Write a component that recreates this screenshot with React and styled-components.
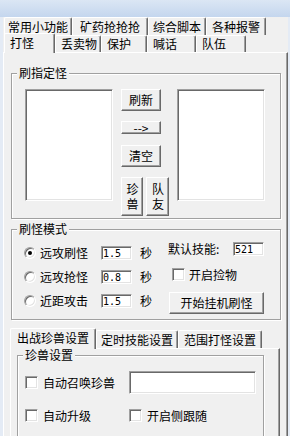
import React from 'react';
import styled, { createGlobalStyle } from 'styled-components';

const FONT = `"Noto Sans CJK SC", "Liberation Sans", sans-serif`;
const MONO = `"DejaVu Sans Mono", "Liberation Mono", monospace`;
const FACE = '#f0f0f0';
const HI = '#ffffff';
const LIGHT = '#e3e3e3';
const SHADOW = '#a0a0a0';
const DARK = '#696969';

const Global = createGlobalStyle`
  html, body { margin: 0; padding: 0; }
  * { box-sizing: border-box; }
  body {
    width: 290px;
    height: 436px;
    overflow: hidden;
    background: linear-gradient(180deg, #dbe6f4 0px, #c4d6ee 17px, #e4ebf5 17px, #e4ebf5 100%);
    font-family: ${FONT};
    font-size: 12px;
    color: #000;
  }
`;

const Window = styled.div`
  margin: 17px 0 0 3px;
  width: 285px;
  height: 419px;
  background: ${FACE};
  display: flex;
  flex-direction: column;
`;

const TabRow = styled.div`
  display: flex;
  align-items: flex-start;
  height: ${p => p.$h}px;
  padding-left: ${p => p.$pl || 0}px;
  flex-shrink: 0;
`;

const Tab = styled.div`
  position: relative;
  z-index: ${p => (p.$active ? 3 : 1)};
  width: ${p => p.$w}px;
  height: ${p => p.$h}px;
  margin-top: ${p => p.$mt || 0}px;
  padding-left: ${p => p.$pl || 0}px;
  padding-bottom: ${p => p.$pb || 0}px;
  display: flex;
  align-items: center;
  justify-content: ${p => (p.$pl ? 'flex-start' : 'center')};
  background: ${FACE};
  border-top: 1px solid ${HI};
  border-left: 1px solid ${HI};
  border-right: 1px solid ${DARK};
  border-radius: 2px 2px 0 0;
  box-shadow: inset -1px 0 0 ${SHADOW};
  line-height: 12px;
  white-space: nowrap;
  flex-shrink: 0;
`;

const Panel = styled.div`
  flex: 1;
  width: ${p => p.$w}px;
  margin-left: ${p => p.$ml || 0}px;
  border-top: 1px solid ${HI};
  border-left: 1px solid ${HI};
  border-right: 1px solid ${DARK};
  box-shadow: inset -1px 0 0 ${SHADOW};
  display: flex;
  flex-direction: column;
  align-items: flex-start;
`;

const GroupBox = styled.div`
  width: ${p => p.$w}px;
  margin-top: ${p => p.$mt}px;
  margin-left: ${p => p.$ml}px;
  border: 1px solid ${SHADOW};
  box-shadow: 1px 1px 0 ${HI}, inset 1px 1px 0 ${HI};
  padding-bottom: ${p => p.$pb || 0}px;
  display: flex;
  flex-direction: column;
  align-items: flex-start;
  flex-shrink: 0;
`;

const GroupTitle = styled.div`
  margin: -7px 0 0 5px;
  padding: 0 2px;
  height: 12px;
  line-height: 12px;
  background: ${FACE};
  white-space: nowrap;
`;

const GroupBody = styled.div`
  display: flex;
  align-items: flex-start;
  margin-top: ${p => p.$mt}px;
  padding-left: ${p => p.$pl || 0}px;
`;

const Sunken = styled.div`
  background: #fff;
  border: 1px solid;
  border-color: ${SHADOW} ${HI} ${HI} ${SHADOW};
  box-shadow: inset 1px 1px 0 ${DARK}, inset -1px -1px 0 ${LIGHT};
`;

const ListBox = styled(Sunken)`
  width: 88px;
  height: 112px;
  flex-shrink: 0;
`;

const ButtonCol = styled.div`
  display: flex;
  flex-direction: column;
  align-items: flex-start;
  width: 48px;
  margin: 0 8px;
`;

const Button = styled.button`
  width: ${p => p.$w}px;
  height: ${p => p.$h}px;
  margin-top: ${p => p.$mt || 0}px;
  margin-left: ${p => p.$ml || 0}px;
  padding: 0;
  background: ${FACE};
  border: 1px solid;
  border-color: ${HI} ${DARK} ${DARK} ${HI};
  box-shadow: inset -1px -1px 0 ${SHADOW};
  font-family: ${FONT};
  font-size: 12px;
  line-height: 12px;
  color: #000;
  display: flex;
  align-items: center;
  justify-content: center;
  text-align: center;
  white-space: nowrap;
  flex-shrink: 0;
`;

const VText = styled.span`
  writing-mode: vertical-rl;
  text-orientation: upright;
  letter-spacing: 3px;
  line-height: 12px;
  margin-top: 3px;
`;

const Pair = styled.div`
  display: flex;
  gap: 3px;
  margin-top: 10px;
`;

const Column = styled.div`
  display: flex;
  flex-direction: column;
  align-items: flex-start;
  margin-left: ${p => p.$ml || 0}px;
`;

const Row = styled.div`
  display: flex;
  align-items: center;
  height: ${p => p.$h}px;
  margin-top: ${p => p.$mt || 0}px;
`;

const Radio = styled.span`
  position: relative;
  width: 12px;
  height: 12px;
  margin-left: 12px;
  border-radius: 50%;
  background: #fff;
  border: 1px solid;
  border-color: ${SHADOW} ${HI} ${HI} ${SHADOW};
  box-shadow: inset 1px 1px 0 ${DARK}, inset -1px -1px 0 ${LIGHT};
  flex-shrink: 0;
  &::after {
    content: '';
    display: ${p => (p.$checked ? 'block' : 'none')};
    position: absolute;
    left: 3px;
    top: 3px;
    width: 4px;
    height: 4px;
    border-radius: 50%;
    background: #000;
  }
`;

const Check = styled(Sunken)`
  width: 13px;
  height: 13px;
  margin-left: ${p => p.$ml || 0}px;
  flex-shrink: 0;
`;

const Label = styled.span`
  margin-left: ${p => p.$ml || 0}px;
  width: ${p => (p.$w ? `${p.$w}px` : 'auto')};
  line-height: 12px;
  white-space: nowrap;
  flex-shrink: 0;
`;

const Field = styled.input`
  width: ${p => p.$w}px;
  height: ${p => p.$h}px;
  margin-left: ${p => p.$ml || 0}px;
  padding: 0 0 0 1px;
  background: #fff;
  border: 1px solid;
  border-color: ${SHADOW} ${HI} ${HI} ${SHADOW};
  box-shadow: inset 1px 1px 0 ${DARK}, inset -1px -1px 0 ${LIGHT};
  font-family: ${MONO};
  font-size: 10px;
  color: #000;
  outline: none;
  flex-shrink: 0;
`;

const Cell = styled.div`
  display: flex;
  align-items: center;
  width: ${p => p.$w}px;
  flex-shrink: 0;
`;

const TabControl = styled.div`
  display: flex;
  flex-direction: column;
  margin: 8px 0 0 6px;
  width: 270px;
  flex: 1;
`;

const topRow1 = [
  ['常用小功能', 68],
  ['矿药抢抢抢', 76],
  ['综合脚本', 58],
  ['各种报警', 60],
];
const topRow2 = [
  ['打怪', 51, true],
  ['丢卖物', 46],
  ['保护', 46],
  ['喊话', 49],
  ['队伍', 50],
];
const bottomTabs = [
  ['出战珍兽设置', 86, true],
  ['定时技能设置', 82],
  ['范围打怪设置', 84],
];

const modes = [
  ['远攻刷怪', '1.5', true],
  ['远攻抢怪', '0.8', false],
  ['近距攻击', '1.5', false],
];

export default function App() {
  return (
    <>
      <Global />
      <Window>
        <TabRow $h={18} $pl={1}>
          {topRow1.map(([t, w]) => (
            <Tab key={t} $w={w} $h={18}>{t}</Tab>
          ))}
        </TabRow>
        <TabRow $h={17} $pl={1}>
          {topRow2.map(([t, w, a]) => (
            <Tab key={t} $w={w} $h={a ? 20 : 17} $mt={a ? -2 : 0} $pl={5} $pb={a ? 2 : 0} $active={a}>
              {t}
            </Tab>
          ))}
        </TabRow>
        <Panel $w={285}>
          <GroupBox $w={270} $mt={20} $ml={7} $pb={2}>
            <GroupTitle>刷指定怪</GroupTitle>
            <GroupBody $mt={10} $pl={13}>
              <ListBox />
              <ButtonCol>
                <Button $w={40} $h={22}>刷新</Button>
                <Button $w={40} $h={13} $mt={10}>--&gt;</Button>
                <Button $w={40} $h={22} $mt={11}>清空</Button>
                <Pair>
                  <Button $w={22} $h={39}><VText>珍兽</VText></Button>
                  <Button $w={23} $h={39}><VText>队友</VText></Button>
                </Pair>
              </ButtonCol>
              <ListBox />
            </GroupBody>
          </GroupBox>

          <GroupBox $w={270} $mt={10} $ml={7} $pb={5}>
            <GroupTitle>刷怪模式</GroupTitle>
            <GroupBody $mt={6}>
              <Column>
                {modes.map(([t, v, c]) => (
                  <Row key={t} $h={24}>
                    <Radio $checked={c} />
                    <Label $ml={4} $w={48}>{t}</Label>
                    <Field $w={31} $h={14} $ml={13} readOnly defaultValue={v} />
                    <Label $ml={8}>秒</Label>
                  </Row>
                ))}
              </Column>
              <Column $ml={16}>
                <Row $h={14} $mt={1}>
                  <Label $w={55}>默认技能:</Label>
                  <Field $w={31} $h={14} $ml={10} readOnly defaultValue="521" />
                </Row>
                <Row $h={13} $mt={12}>
                  <Check $ml={4} />
                  <Label $ml={4}>开启捡物</Label>
                </Row>
                <Button $w={95} $h={22} $mt={11} $ml={1}>开始挂机刷怪</Button>
              </Column>
            </GroupBody>
          </GroupBox>

          <TabControl>
            <TabRow $h={20}>
              {bottomTabs.map(([t, w, a]) => (
                <Tab key={t} $w={w} $h={a ? 21 : 18} $mt={a ? 0 : 2} $pb={a ? 2 : 0} $active={a}>
                  {t}
                </Tab>
              ))}
            </TabRow>
            <Panel $w={270}>
              <GroupBox $w={247} $mt={6} $ml={6} $pb={10}>
                <GroupTitle>珍兽设置</GroupTitle>
                <Row $h={23} $mt={10}>
                  <Cell $w={111}>
                    <Check $ml={7} />
                    <Label $ml={5}>自动召唤珍兽</Label>
                  </Cell>
                  <Field $w={127} $h={23} readOnly defaultValue="" />
                </Row>
                <Row $h={23} $mt={10}>
                  <Cell $w={111}>
                    <Check $ml={7} />
                    <Label $ml={5}>自动升级</Label>
                  </Cell>
                  <Cell $w={120}>
                    <Check />
                    <Label $ml={5}>开启侧跟随</Label>
                  </Cell>
                </Row>
              </GroupBox>
            </Panel>
          </TabControl>
        </Panel>
      </Window>
    </>
  );
}
